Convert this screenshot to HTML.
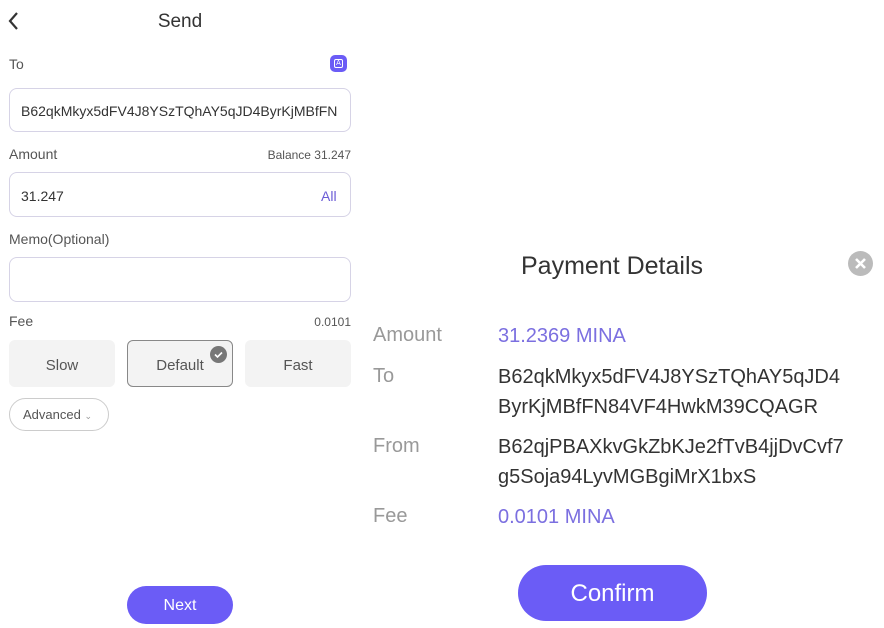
<!DOCTYPE html>
<html><head><meta charset="utf-8"><style>
*{margin:0;padding:0;box-sizing:border-box}
body{width:884px;height:628px;background:#fff;font-family:"Liberation Sans",sans-serif;position:relative;overflow:hidden;color:#333}
.a{position:absolute;white-space:nowrap}
.lbl{font-size:14px;color:#555}
.box{position:absolute;border:1px solid #d6d3e6;border-radius:8px;left:9px;width:342px}
.btn{position:absolute;top:340px;width:106px;height:47px;border-radius:6px;background:#f3f3f3;font-size:15px;color:#555;display:flex;align-items:center;justify-content:center;padding-top:3px}
.rl{position:absolute;left:373px;font-size:20px;color:#999}
.rv{position:absolute;left:498px;font-size:20px;color:#333;line-height:30px}
</style></head><body>
<svg class="a" style="left:6px;top:11px" width="16" height="20" viewBox="0 0 16 20"><path d="M11 2 L4 10 L11 18" fill="none" stroke="#333" stroke-width="2.2"/></svg>
<div class="a" style="left:0;width:360px;text-align:center;top:11px;font-size:19px;color:#333">Send</div>
<div class="a lbl" style="left:9px;top:56px">To</div>
<div class="a" style="left:330px;top:55px;width:17px;height:17px;border-radius:5px;background:#6b5cf6"><div style="position:absolute;left:4px;top:4px;width:9px;height:9px;border:1px solid #fff;border-radius:2px;font-size:7px;color:#fff;text-align:center;line-height:8px">A</div></div>
<div class="box" style="top:88px;height:44px"></div>
<div class="a" style="left:21px;top:103px;font-size:14px;width:330px;overflow:hidden">B62qkMkyx5dFV4J8YSzTQhAY5qJD4ByrKjMBfFN</div>
<div class="a lbl" style="left:9px;top:146px">Amount</div>
<div class="a" style="right:533px;top:148px;font-size:12px;color:#555">Balance 31.247</div>
<div class="box" style="top:172px;height:45px"></div>
<div class="a" style="left:21px;top:188px;font-size:14px">31.247</div>
<div class="a" style="left:321px;top:188px;font-size:14px;color:#6b5cd6">All</div>
<div class="a lbl" style="left:9px;top:231px">Memo(Optional)</div>
<div class="box" style="top:257px;height:45px"></div>
<div class="a lbl" style="left:9px;top:313px">Fee</div>
<div class="a" style="right:533px;top:315px;font-size:12px;color:#555">0.0101</div>
<div class="btn" style="left:9px">Slow</div>
<div class="btn" style="left:127px;border:1px solid #888">Default</div>
<div class="a" style="left:210px;top:346px;width:17px;height:17px;border-radius:50%;background:#777"><svg width="17" height="17"><path d="M5 8.5 L7.5 11 L12 6.5" fill="none" stroke="#fff" stroke-width="1.6"/></svg></div>
<div class="btn" style="left:245px">Fast</div>
<div class="a" style="left:9px;top:398px;width:100px;height:33px;border:1px solid #ccc;border-radius:17px;font-size:13px;color:#555;line-height:31px;padding-left:13px">Advanced <span style="font-size:9px;color:#999">&#8964;</span></div>
<div class="a" style="left:127px;top:586px;width:106px;height:38px;border-radius:19px;background:#6b5cf6;color:#fff;font-size:16px;text-align:center;line-height:40px">Next</div>

<div class="a" style="left:360px;width:504px;text-align:center;top:252px;font-size:25px;color:#333">Payment Details</div>
<div class="a" style="left:848px;top:251px;width:25px;height:25px;border-radius:50%;background:#bbb"><svg width="25" height="25"><path d="M8 8 L17 17 M17 8 L8 17" stroke="#fff" stroke-width="2.6"/></svg></div>
<div class="rl" style="top:324px">Amount</div>
<div class="rv" style="top:321px;color:#7b6fe0">31.2369 MINA</div>
<div class="rl" style="top:365px">To</div>
<div class="rv" style="top:362px">B62qkMkyx5dFV4J8YSzTQhAY5qJD4<br>ByrKjMBfFN84VF4HwkM39CQAGR</div>
<div class="rl" style="top:435px">From</div>
<div class="rv" style="top:432px">B62qjPBAXkvGkZbKJe2fTvB4jjDvCvf7<br>g5Soja94LyvMGBgiMrX1bxS</div>
<div class="rl" style="top:505px">Fee</div>
<div class="rv" style="top:502px;color:#7b6fe0">0.0101 MINA</div>
<div class="a" style="left:518px;top:565px;width:189px;height:56px;border-radius:28px;background:#6b5cf6;color:#fff;font-size:24px;text-align:center;line-height:58px">Confirm</div>
</body></html>
